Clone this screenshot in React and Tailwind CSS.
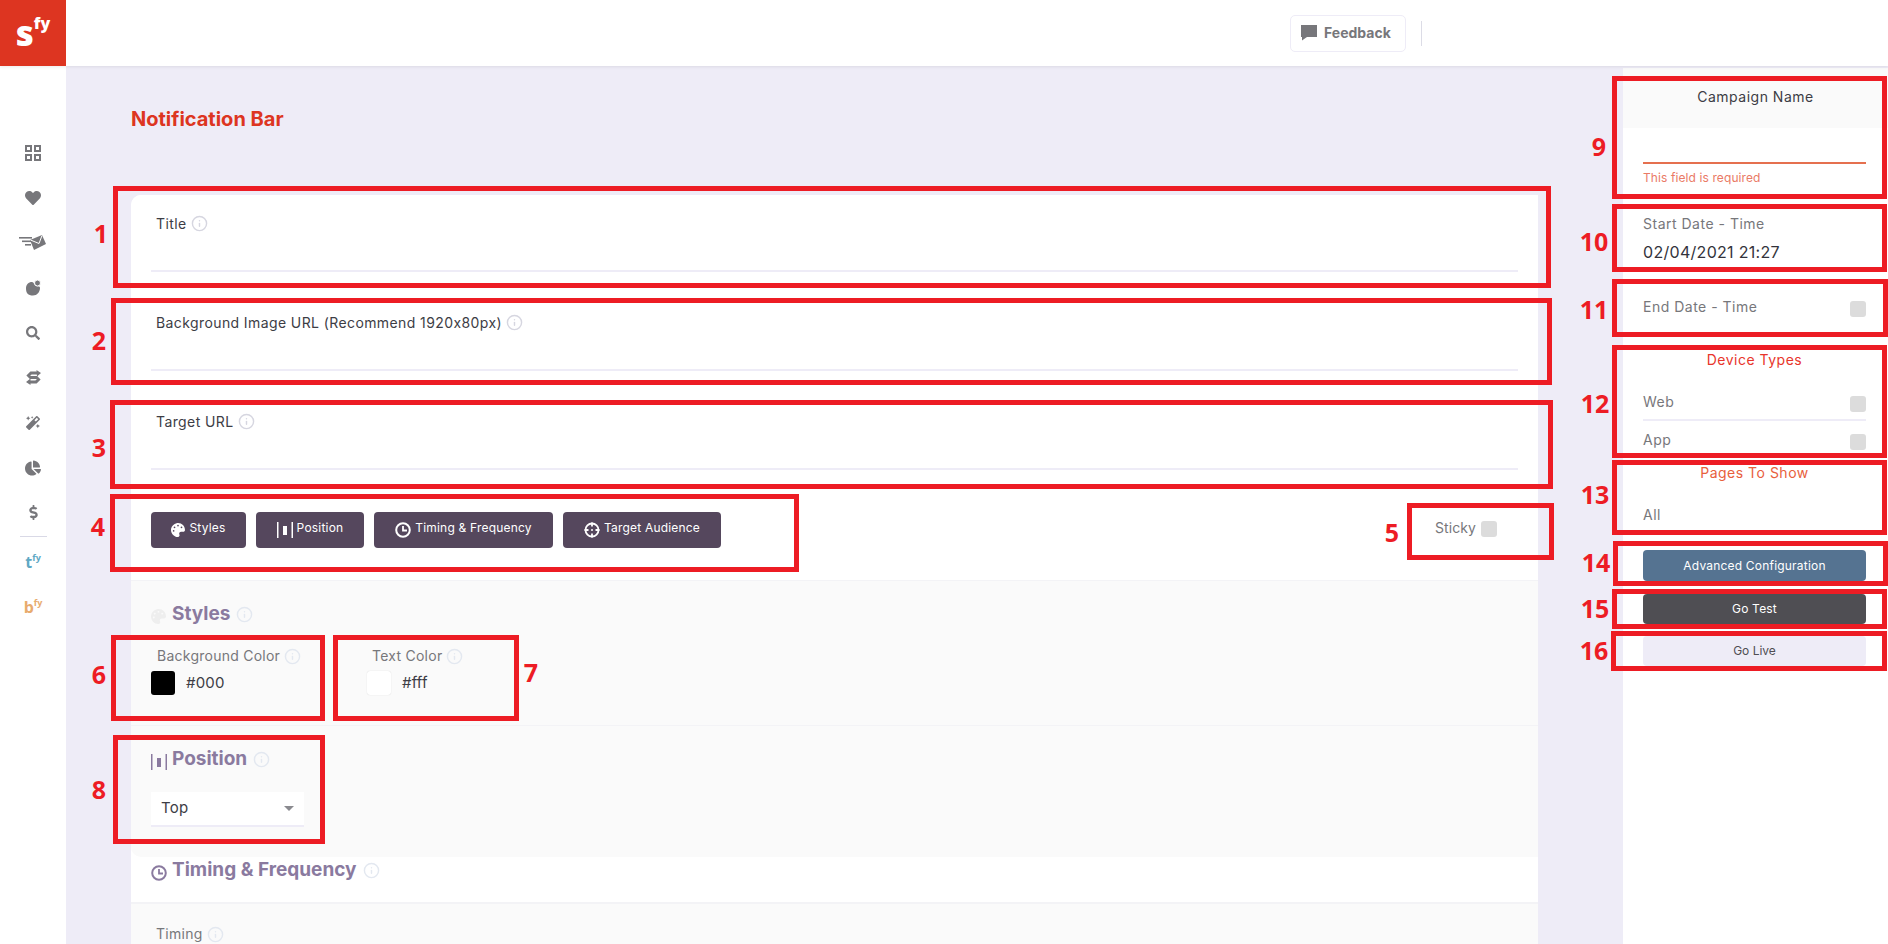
import React from 'react'
import { Info } from 'lucide-react'
import { FaHeart, FaSearch, FaMagic, FaChartPie, FaDollarSign, FaPalette } from 'react-icons/fa'

const boxes = [
  'left-[113px] top-[186px] w-[1438px] h-[102px]',
  'left-[111px] top-[298px] w-[1441px] h-[87px]',
  'left-[110px] top-[400px] w-[1443px] h-[89px]',
  'left-[110px] top-[494px] w-[689px] h-[78px]',
  'left-[1407px] top-[503px] w-[147px] h-[57px]',
  'left-[111px] top-[635px] w-[214px] h-[86px]',
  'left-[333px] top-[635px] w-[186px] h-[86px]',
  'left-[113px] top-[735px] w-[212px] h-[109px]',
  'left-[1612px] top-[76px] w-[275px] h-[123px]',
  'left-[1612px] top-[204px] w-[275px] h-[68px]',
  'left-[1612px] top-[279px] w-[276px] h-[58px]',
  'left-[1612px] top-[345px] w-[275px] h-[113px]',
  'left-[1612px] top-[460px] w-[275px] h-[75px]',
  'left-[1613px] top-[541px] w-[275px] h-[45px]',
  'left-[1612px] top-[589px] w-[275px] h-[40px]',
  'left-[1611px] top-[631px] w-[276px] h-[40px]',
]

const numbers = [
  { n: 1, pos: 'left-[101px] top-[233px]' },
  { n: 2, pos: 'left-[99px] top-[340px]' },
  { n: 3, pos: 'left-[99px] top-[447px]' },
  { n: 4, pos: 'left-[98px] top-[526px]' },
  { n: 5, pos: 'left-[1392px] top-[532px]' },
  { n: 6, pos: 'left-[99px] top-[674px]' },
  { n: 7, pos: 'left-[531px] top-[672px]' },
  { n: 8, pos: 'left-[99px] top-[789px]' },
  { n: 9, pos: 'left-[1599px] top-[146px]' },
  { n: 10, pos: 'left-[1594px] top-[241px]' },
  { n: 11, pos: 'left-[1594px] top-[309px]' },
  { n: 12, pos: 'left-[1595px] top-[403px]' },
  { n: 13, pos: 'left-[1595px] top-[494px]' },
  { n: 14, pos: 'left-[1596px] top-[562px]' },
  { n: 15, pos: 'left-[1595px] top-[608px]' },
  { n: 16, pos: 'left-[1594px] top-[650px]' },
]

const GridIcon = () => (
  <svg width="16" height="16" viewBox="0 0 16 16" fill="none" stroke="currentColor" strokeWidth="2">
    <rect x="1" y="1" width="5" height="5" />
    <rect x="10" y="1" width="5" height="5" />
    <rect x="1" y="10" width="5" height="5" />
    <rect x="10" y="10" width="5" height="5" />
  </svg>
)

const SendIcon = () => (
  <svg width="28" height="18" viewBox="0 0 28 18" fill="currentColor">
    <rect x="0" y="3" width="13" height="1.6" />
    <rect x="3" y="6.5" width="10" height="1.6" />
    <rect x="6" y="10" width="6" height="1.6" />
    <path d="M11 6 L23 1 L27 10 L15 16 Z" fill="currentColor" />
    <path d="M11.5 6 L20 9.5 L23 1.5" fill="none" stroke="#fff" strokeWidth="1" />
  </svg>
)

const BlobIcon = () => (
  <svg width="16" height="16" viewBox="0 0 16 16" fill="currentColor">
    <path d="M7 2 C9 2 9 5 11 6 C13 6.5 15 6 15 8 C15 12 12 15.5 8 15.5 C3 15.5 1 13 1 8.5 C1 4.5 3.5 2 7 2 Z" />
    <circle cx="12.5" cy="3" r="3" stroke="#fff" strokeWidth="1" />
  </svg>
)

// S made of two arrows
const SwapIcon = () => (
  <svg width="15" height="15" viewBox="0 0 15 15" fill="none" stroke="currentColor" strokeWidth="3">
    <path d="M11 3 H5 L2.5 5.5 L4.5 7.5 H10.5 L12.5 9.5 L10 12 H4" />
    <path d="M10.5 0 L15 3 L11 6.5 Z M4.5 8.5 L0 12 L4.5 15 Z" fill="currentColor" stroke="none" />
  </svg>
)

const BarsIcon = ({ className }) => (
  <svg className={className} width="16" height="16" viewBox="0 0 16 16" fill="currentColor">
    <rect x="0" y="0" width="1.5" height="16" />
    <rect x="14.5" y="0" width="1.5" height="16" />
    <rect x="6" y="4" width="4" height="9" />
  </svg>
)

const ClockIcon = ({ className }) => (
  <svg className={className} width="16" height="16" viewBox="0 0 16 16" fill="none" stroke="currentColor" strokeWidth="2">
    <circle cx="8" cy="8" r="6.8" />
    <path d="M8 4 V8.5 H12" strokeWidth="1.8" />
  </svg>
)

const TargetIcon = () => (
  <svg width="16" height="16" viewBox="0 0 16 16" fill="none" stroke="currentColor" strokeWidth="1.8">
    <circle cx="8" cy="8" r="6.5" />
    <path d="M8 0.5 V4.5 M8 11.5 V15.5 M0.5 8 H4.5 M11.5 8 H15.5" />
    <circle cx="8" cy="8" r="1" fill="currentColor" stroke="none" />
  </svg>
)

const ChatIcon = () => (
  <svg width="16" height="16" viewBox="0 0 16 16" fill="currentColor">
    <path d="M0 0 H16 V12 H6 L4.5 13 L1 15.5 V12 H0 Z" />
  </svg>
)

const navIcons = [
  <GridIcon key="grid" />,
  <FaHeart key="heart" size={16} />,
  <SendIcon key="send" />,
  <BlobIcon key="blob" />,
  <FaSearch key="search" size={14} />,
  <SwapIcon key="swap" />,
  <FaMagic key="magic" size={14} />,
  <FaChartPie key="pie" size={16} />,
  <FaDollarSign key="dollar" size={15} />,
]

const Tip = ({ className = 'text-[#d6d6e0]' }) => <Info size={17} strokeWidth={2} className={`inline-block ${className}`} />

const Checkbox = () => <span className="block w-4 h-4 rounded-[3px] bg-[#dcdcdc]" />

const Field = ({ label }) => (
  <div className="h-[99px] px-5 bg-white">
    <div className="h-[75px] pt-[20px] pl-[5px] flex items-start gap-[4px] text-[14px] tracking-[0.4px] leading-[18px] text-[#3d3d45]">
      <span>{label}</span>
      <Tip />
    </div>
    <div className="h-[2px] bg-[#eeecf7]" />
  </div>
)

const ActionButton = ({ icon, label, width }) => (
  <button className={`h-9 rounded-[4px] bg-[#55475d] text-white text-[12px] tracking-[0.2px] flex items-center justify-center gap-[4px] ${width}`}>
    {icon}
    <span className="-mt-[4px]">{label}</span>
  </button>
)

const SectionTitle = ({ icon, label }) => (
  <div className="flex items-center text-[#8a7a9f] font-bold text-[19px] leading-6">
    <span className="w-[21px] mt-[5px] flex">{icon}</span>
    <span>{label}</span>
    <Tip className="ml-[6px] text-[#e3e8f0]" />
  </div>
)

const ColorField = ({ label, value, swatch, width, labelPad }) => (
  <div className={width}>
    <div className={`flex items-center gap-[4px] text-[14px] tracking-[0.25px] leading-[18px] text-[#77777b] ${labelPad}`}>
      <span>{label}</span>
      <Tip className="text-[#e3e8f0]" />
    </div>
    <div className="flex items-center gap-[11px] mt-[6px]">
      <span className={`block w-6 h-6 rounded-[3px] ${swatch}`} />
      <span className="text-[15px] tracking-[0.2px] text-[#3d3d45]">{value}</span>
    </div>
  </div>
)

const App = () => {
  return (
    <div className="relative w-[1888px] h-[944px] overflow-hidden bg-[#eeecf7] flex flex-col [font-family:Inter,sans-serif]">
      <header className="h-[66px] shrink-0 bg-white flex items-center relative z-10 shadow-[0_1px_3px_rgba(0,0,0,0.08)]">
        <div className="w-[66px] h-[66px] bg-[#dd3521] text-white flex items-center justify-center font-extrabold [font-family:'Open_Sans',sans-serif]">
          <span className="text-[35px] leading-none -mt-[1px]">s</span>
          <span className="text-[16px] leading-none -mt-[20px]">fy</span>
        </div>
        <button className="ml-[1224px] w-[116px] h-[37px] pl-[10px] rounded-[5px] border border-[#eeecf7] flex items-center gap-[7px] text-[14px] font-bold text-[#77777b]">
          <ChatIcon />
          <span className="-mt-[2px]">Feedback</span>
        </button>
        <div className="ml-[15px] w-[1px] h-[25px] bg-[#dcdce6]" />
      </header>

      <div className="flex flex-1 min-h-0">
        <aside className="w-[66px] shrink-0 bg-white flex flex-col items-center pt-[64px] text-[#77777b]">
          {navIcons.map((icon, i) => (
            <div key={i} className="h-[45px] w-full shrink-0 flex items-center justify-center">
              {icon}
            </div>
          ))}
          <div className="w-[27px] h-[1px] mt-[1px] bg-[#d9d9e6]" />
          <div className="h-[45px] mt-[1px] flex items-center font-bold text-[#5fa8c4] [font-family:'Open_Sans',sans-serif]">
            <span className="text-[16px] leading-none mt-[3px]">t</span>
            <span className="text-[9px] leading-none -mt-[7px]">fy</span>
          </div>
          <div className="h-[45px] flex items-center font-bold text-[#e8ab6e] [font-family:'Open_Sans',sans-serif]">
            <span className="text-[16px] leading-none mt-[3px]">b</span>
            <span className="text-[9px] leading-none -mt-[7px]">fy</span>
          </div>
        </aside>

        <main className="w-[1557px] shrink-0 pl-[65px] pt-[41px]">
          <h1 className="h-6 text-[20px] leading-6 font-bold text-[#dd3521]">Notification Bar</h1>
          <div className="w-[1407px] mt-[64px] rounded-tl-[10px] overflow-hidden bg-white">
            <Field label="Title" />
            <Field label="Background Image URL (Recommend 1920x80px)" />
            <Field label="Target URL" />

            <div className="h-[89px] px-5 pt-5 flex items-start gap-[10px] border-b border-[#f3f3f6]">
              <ActionButton icon={<FaPalette size={14} />} label="Styles" width="w-[95px]" />
              <ActionButton icon={<BarsIcon />} label="Position" width="w-[108px]" />
              <ActionButton icon={<ClockIcon />} label="Timing & Frequency" width="w-[179px]" />
              <ActionButton icon={<TargetIcon />} label="Target Audience" width="w-[158px]" />
              <div className="ml-auto mr-[21px] mt-[7px] flex items-center gap-[5px] text-[14px] tracking-[0.1px] text-[#77777b]">
                <span className="-mt-[2px]">Sticky</span>
                <Checkbox />
              </div>
            </div>

            <section className="h-[145px] px-5 pt-[21px] bg-[#fafafa] border-b border-[#f3f3f6]">
              <SectionTitle icon={<FaPalette size={15} className="text-[#eeeeee]" />} label="Styles" />
              <div className="flex mt-[21px]">
                <ColorField label="Background Color" value="#000" swatch="bg-black" width="w-[216px]" labelPad="pl-[6px]" />
                <ColorField label="Text Color" value="#fff" swatch="bg-white shadow-[0_0_1px_rgba(0,0,0,0.2)]" width="w-[200px]" labelPad="pl-[5px]" />
              </div>
            </section>

            <section className="h-[131px] px-5 pt-[21px] bg-[#fafafa] rounded-bl-[10px]">
              <SectionTitle icon={<BarsIcon className="text-[#8a7a9f]" />} label="Position" />
              <div className="w-[153px] h-[35px] mt-[21px] pl-[10px] pr-[10px] bg-white border-b-2 border-[#eeecf7] flex items-center justify-between text-[15px] tracking-[0.2px] text-[#3d3d45]">
                <span>Top</span>
                <span className="w-0 h-0 border-x-[5px] border-x-transparent border-t-[5px] border-t-[#8a8a8f]" />
              </div>
            </section>

            <section className="h-[47px] px-5 pt-[1px] bg-white border-b-2 border-[#f3f3f6]">
              <SectionTitle icon={<ClockIcon className="text-[#8a7a9f]" />} label="Timing & Frequency" />
            </section>

            <section className="h-[60px] pr-5 pt-[21px] pl-[25px] bg-[#fafafa]">
              <div className="flex items-center gap-[4px] text-[14px] tracking-[0.3px] leading-[18px] text-[#77777b]">
                <span>Timing</span>
                <Tip className="text-[#e3e8f0]" />
              </div>
            </section>
          </div>
        </main>

        <aside className="flex-1 mt-[2px] bg-white text-[14px] tracking-[0.5px]">
          <div className="h-[60px] bg-[#fafafa] pt-[20px] text-center leading-[18px] text-[#3d3d45]">Campaign Name</div>
          <div className="px-5 pr-[22px]">
            <div className="h-[36px] border-b-2 border-[#e5704f]" />
            <div className="mt-[6px] h-[15px] text-[12px] tracking-[0.1px] leading-[15px] text-[#ea7a66]">This field is required</div>

            <div className="mt-[30px] h-[18px] leading-[18px] text-[#77777b]">Start Date - Time</div>
            <div className="mt-[9px] h-[20px] text-[16px] tracking-[0.3px] leading-[20px] text-[#33333b]">02/04/2021 21:27</div>

            <div className="mt-[36px] h-[18px] flex items-center justify-between leading-[18px] text-[#77777b]">
              <span>End Date - Time</span>
              <span className="mt-[4px]"><Checkbox /></span>
            </div>

            <div className="mt-[35px] h-[18px] text-center leading-[18px] text-[#e8352b]">Device Types</div>
            <div className="mt-[26px] h-[18px] flex items-center justify-between leading-[18px] text-[#77777b]">
              <span className="-mt-[4px]">Web</span>
              <Checkbox />
            </div>
            <div className="mt-[6px] h-[2px] bg-[#eeecf7]" />
            <div className="mt-[12px] h-[18px] flex items-center justify-between leading-[18px] text-[#77777b]">
              <span className="-mt-[4px]">App</span>
              <Checkbox />
            </div>

            <div className="mt-[13px] h-[18px] text-center leading-[18px] text-[#e8603c]">Pages To Show</div>
            <div className="mt-[24px] h-[18px] leading-[18px] text-[#77777b]">All</div>

            <button className="block w-full mt-[26px] h-[31px] rounded-[4px] bg-[#557391] text-white text-[12px] tracking-[0.2px]">Advanced Configuration</button>
            <button className="block w-full mt-[13px] h-[30px] rounded-[4px] bg-[#4f4e53] text-white text-[12px] tracking-[0.2px]">Go Test</button>
            <button className="block w-full mt-[12px] h-[30px] rounded-[4px] bg-[#eeecf7] text-[#4f4e53] text-[12px] tracking-[0]">Go Live</button>
          </div>
        </aside>
      </div>

      {/* red annotations drawn over the screenshot */}
      {boxes.map((pos) => (
        <div key={pos} className={`absolute z-20 border-[5px] border-[#ed1c24] pointer-events-none ${pos}`} />
      ))}
      {numbers.map(({ n, pos }) => (
        <span
          key={n}
          className={`absolute z-20 -translate-x-1/2 -translate-y-1/2 text-[25px] leading-none font-bold text-[#ed1c24] [font-family:'Open_Sans',sans-serif] ${pos}`}
        >
          {n}
        </span>
      ))}
    </div>
  )
}

export default App
